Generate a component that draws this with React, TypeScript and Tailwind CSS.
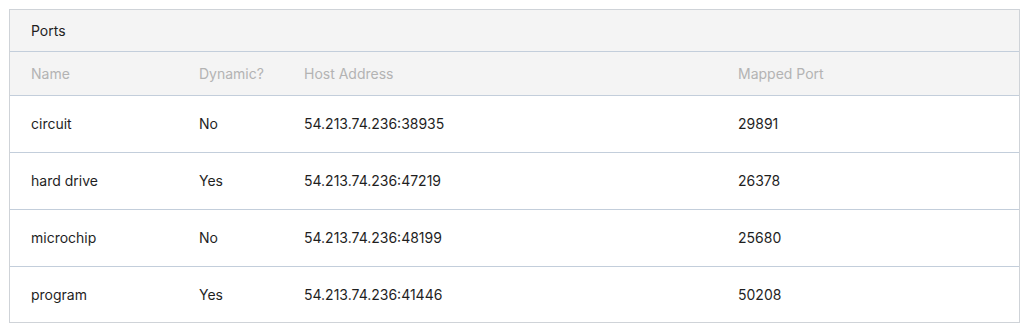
import React from 'react';

interface PortRow {
  name: string;
  dynamic: boolean;
  hostAddress: string;
  mappedPort: number;
}

const ports: PortRow[] = [
  { name: 'circuit', dynamic: false, hostAddress: '54.213.74.236:38935', mappedPort: 29891 },
  { name: 'hard drive', dynamic: true, hostAddress: '54.213.74.236:47219', mappedPort: 26378 },
  { name: 'microchip', dynamic: false, hostAddress: '54.213.74.236:48199', mappedPort: 25680 },
  { name: 'program', dynamic: true, hostAddress: '54.213.74.236:41446', mappedPort: 50208 },
];

export default function App() {
  return (
    <div className="min-h-[334px] bg-white pt-[9px] pl-[9px] pr-[8px] font-['Inter',sans-serif] text-[14px]">
      <div className="border border-[#cfd3d8] bg-white">
        <div className="h-[42px] bg-[#f4f4f4] border-b border-[#c3cedb] flex items-center px-[21px] text-[#1f1f1f]">
          Ports
        </div>
        <table className="w-full border-collapse">
          <thead>
            <tr className="h-[43px] bg-[#f4f4f4] border-b border-[#c3cedb] text-[#b3b3b3]">
              <th className="w-[189px] pl-[21px] text-left font-normal">Name</th>
              <th className="w-[105px] text-left font-normal">Dynamic?</th>
              <th className="w-[434px] text-left font-normal">Host Address</th>
              <th className="text-left font-normal">Mapped Port</th>
            </tr>
          </thead>
          <tbody className="text-[#1f1f1f]">
            {ports.map((port, index) => (
              <tr
                key={port.name}
                className={index < ports.length - 1 ? 'h-[57px] border-b border-[#c3cedb]' : 'h-[56px]'}
              >
                <td className="pl-[21px]">{port.name}</td>
                <td>{port.dynamic ? 'Yes' : 'No'}</td>
                <td>{port.hostAddress}</td>
                <td>{port.mappedPort}</td>
              </tr>
            ))}
          </tbody>
        </table>
      </div>
    </div>
  );
}
